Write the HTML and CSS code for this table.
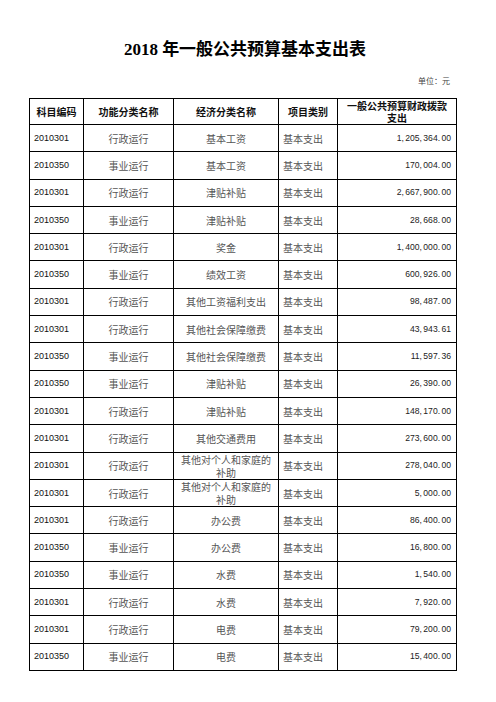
FILE: index.html
```html
<!DOCTYPE html>
<html lang="zh">
<head>
<meta charset="utf-8">
<title>2018年一般公共预算基本支出表</title>
<link rel="stylesheet" href="styles.css">
</head>
<body>
<div class="sheet">
  <h1 class="title">2018 年一般公共预算基本支出表</h1>
  <div class="unit">单位：元</div>
  <table class="grid">
    <colgroup>
      <col class="c1"><col class="c2"><col class="c3"><col class="c4"><col class="c5">
    </colgroup>
    <thead>
      <tr>
        <th>科目编码</th>
        <th>功能分类名称</th>
        <th>经济分类名称</th>
        <th>项目类别</th>
        <th class="long">一般公共预算财政拨款支出</th>
      </tr>
    </thead>
    <tbody>
      <tr><td class="code">2010301</td><td class="ctr">行政运行</td><td class="ctr">基本工资</td><td class="kind">基本支出</td><td class="amt">1, 205, 364. 00</td></tr>
      <tr><td class="code">2010350</td><td class="ctr">事业运行</td><td class="ctr">基本工资</td><td class="kind">基本支出</td><td class="amt">170, 004. 00</td></tr>
      <tr><td class="code">2010301</td><td class="ctr">行政运行</td><td class="ctr">津贴补贴</td><td class="kind">基本支出</td><td class="amt">2, 667, 900. 00</td></tr>
      <tr><td class="code">2010350</td><td class="ctr">事业运行</td><td class="ctr">津贴补贴</td><td class="kind">基本支出</td><td class="amt">28, 668. 00</td></tr>
      <tr><td class="code">2010301</td><td class="ctr">行政运行</td><td class="ctr">奖金</td><td class="kind">基本支出</td><td class="amt">1, 400, 000. 00</td></tr>
      <tr><td class="code">2010350</td><td class="ctr">事业运行</td><td class="ctr">绩效工资</td><td class="kind">基本支出</td><td class="amt">600, 926. 00</td></tr>
      <tr><td class="code">2010301</td><td class="ctr">行政运行</td><td class="ctr">其他工资福利支出</td><td class="kind">基本支出</td><td class="amt">98, 487. 00</td></tr>
      <tr><td class="code">2010301</td><td class="ctr">行政运行</td><td class="ctr">其他社会保障缴费</td><td class="kind">基本支出</td><td class="amt">43, 943. 61</td></tr>
      <tr><td class="code">2010350</td><td class="ctr">事业运行</td><td class="ctr">其他社会保障缴费</td><td class="kind">基本支出</td><td class="amt">11, 597. 36</td></tr>
      <tr><td class="code">2010350</td><td class="ctr">事业运行</td><td class="ctr">津贴补贴</td><td class="kind">基本支出</td><td class="amt">26, 390. 00</td></tr>
      <tr><td class="code">2010301</td><td class="ctr">行政运行</td><td class="ctr">津贴补贴</td><td class="kind">基本支出</td><td class="amt">148, 170. 00</td></tr>
      <tr><td class="code">2010301</td><td class="ctr">行政运行</td><td class="ctr">其他交通费用</td><td class="kind">基本支出</td><td class="amt">273, 600. 00</td></tr>
      <tr><td class="code">2010301</td><td class="ctr">行政运行</td><td class="ctr wrap">其他对个人和家庭的补助</td><td class="kind">基本支出</td><td class="amt">278, 040. 00</td></tr>
      <tr><td class="code">2010301</td><td class="ctr">行政运行</td><td class="ctr wrap">其他对个人和家庭的补助</td><td class="kind">基本支出</td><td class="amt">5, 000. 00</td></tr>
      <tr><td class="code">2010301</td><td class="ctr">行政运行</td><td class="ctr">办公费</td><td class="kind">基本支出</td><td class="amt">86, 400. 00</td></tr>
      <tr><td class="code">2010350</td><td class="ctr">事业运行</td><td class="ctr">办公费</td><td class="kind">基本支出</td><td class="amt">16, 800. 00</td></tr>
      <tr><td class="code">2010350</td><td class="ctr">事业运行</td><td class="ctr">水费</td><td class="kind">基本支出</td><td class="amt">1, 540. 00</td></tr>
      <tr><td class="code">2010301</td><td class="ctr">行政运行</td><td class="ctr">水费</td><td class="kind">基本支出</td><td class="amt">7, 920. 00</td></tr>
      <tr><td class="code">2010301</td><td class="ctr">行政运行</td><td class="ctr">电费</td><td class="kind">基本支出</td><td class="amt">79, 200. 00</td></tr>
      <tr><td class="code">2010350</td><td class="ctr">事业运行</td><td class="ctr">电费</td><td class="kind">基本支出</td><td class="amt">15, 400. 00</td></tr>
    </tbody>
  </table>
</div>
</body>
</html>
```

FILE: styles.css
```css
html, body {
  margin: 0;
  padding: 0;
  background: #ffffff;
}

body {
  font-family: "Liberation Serif", "Noto Sans CJK SC", serif;
  color: #000;
}

.sheet {
  width: 427px;
  margin-left: 29px;
  padding-top: 39px;
}

.title {
  margin: 0;
  padding-left: 5px;
  text-align: center;
  font-family: "Liberation Serif", "Noto Sans CJK SC", serif;
  font-size: 17px;
  font-weight: bold;
  line-height: 22px;
  height: 22px;
}

.unit {
  margin-top: 15px;
  padding-right: 6px;
  text-align: right;
  font-family: "Noto Sans CJK SC", sans-serif;
  font-size: 8px;
  line-height: 10px;
  color: #444;
  height: 10px;
}

.grid {
  margin-top: 12px;
  width: 427px;
  border-collapse: collapse;
  table-layout: fixed;
}

.c1 { width: 54px; }
.c2 { width: 90px; }
.c3 { width: 105px; }
.c4 { width: 59px; }
.c5 { width: 119px; }

.grid th,
.grid td {
  border: 1px solid #000;
  padding: 0 5px;
  vertical-align: middle;
  overflow: hidden;
}

.grid th {
  height: 25px;
  font-family: "Noto Sans CJK SC", sans-serif;
  font-weight: bold;
  font-size: 10px;
  line-height: 12px;
  text-align: center;
  color: #111;
  padding: 0 2px;
}

.grid th.long {
  padding: 0 8px;
}

.grid td {
  height: 26.3px;
  font-family: "Noto Sans CJK SC", sans-serif;
  font-size: 10px;
  line-height: 13px;
  color: #555;
}

.grid td.code {
  font-family: "Liberation Sans", Arial, sans-serif;
  font-size: 9px;
  color: #111;
  padding-left: 4px;
}

.grid td.ctr {
  text-align: center;
}

.grid td.wrap {
  padding: 0 6px;
}

.grid td.kind {
  padding-left: 4px;
  text-align: left;
}

.grid td.amt {
  text-align: right;
  font-family: "Liberation Sans", Arial, sans-serif;
  font-size: 8.6px;
  color: #222;
  padding-right: 5px;
  word-spacing: -1px;
}
```
